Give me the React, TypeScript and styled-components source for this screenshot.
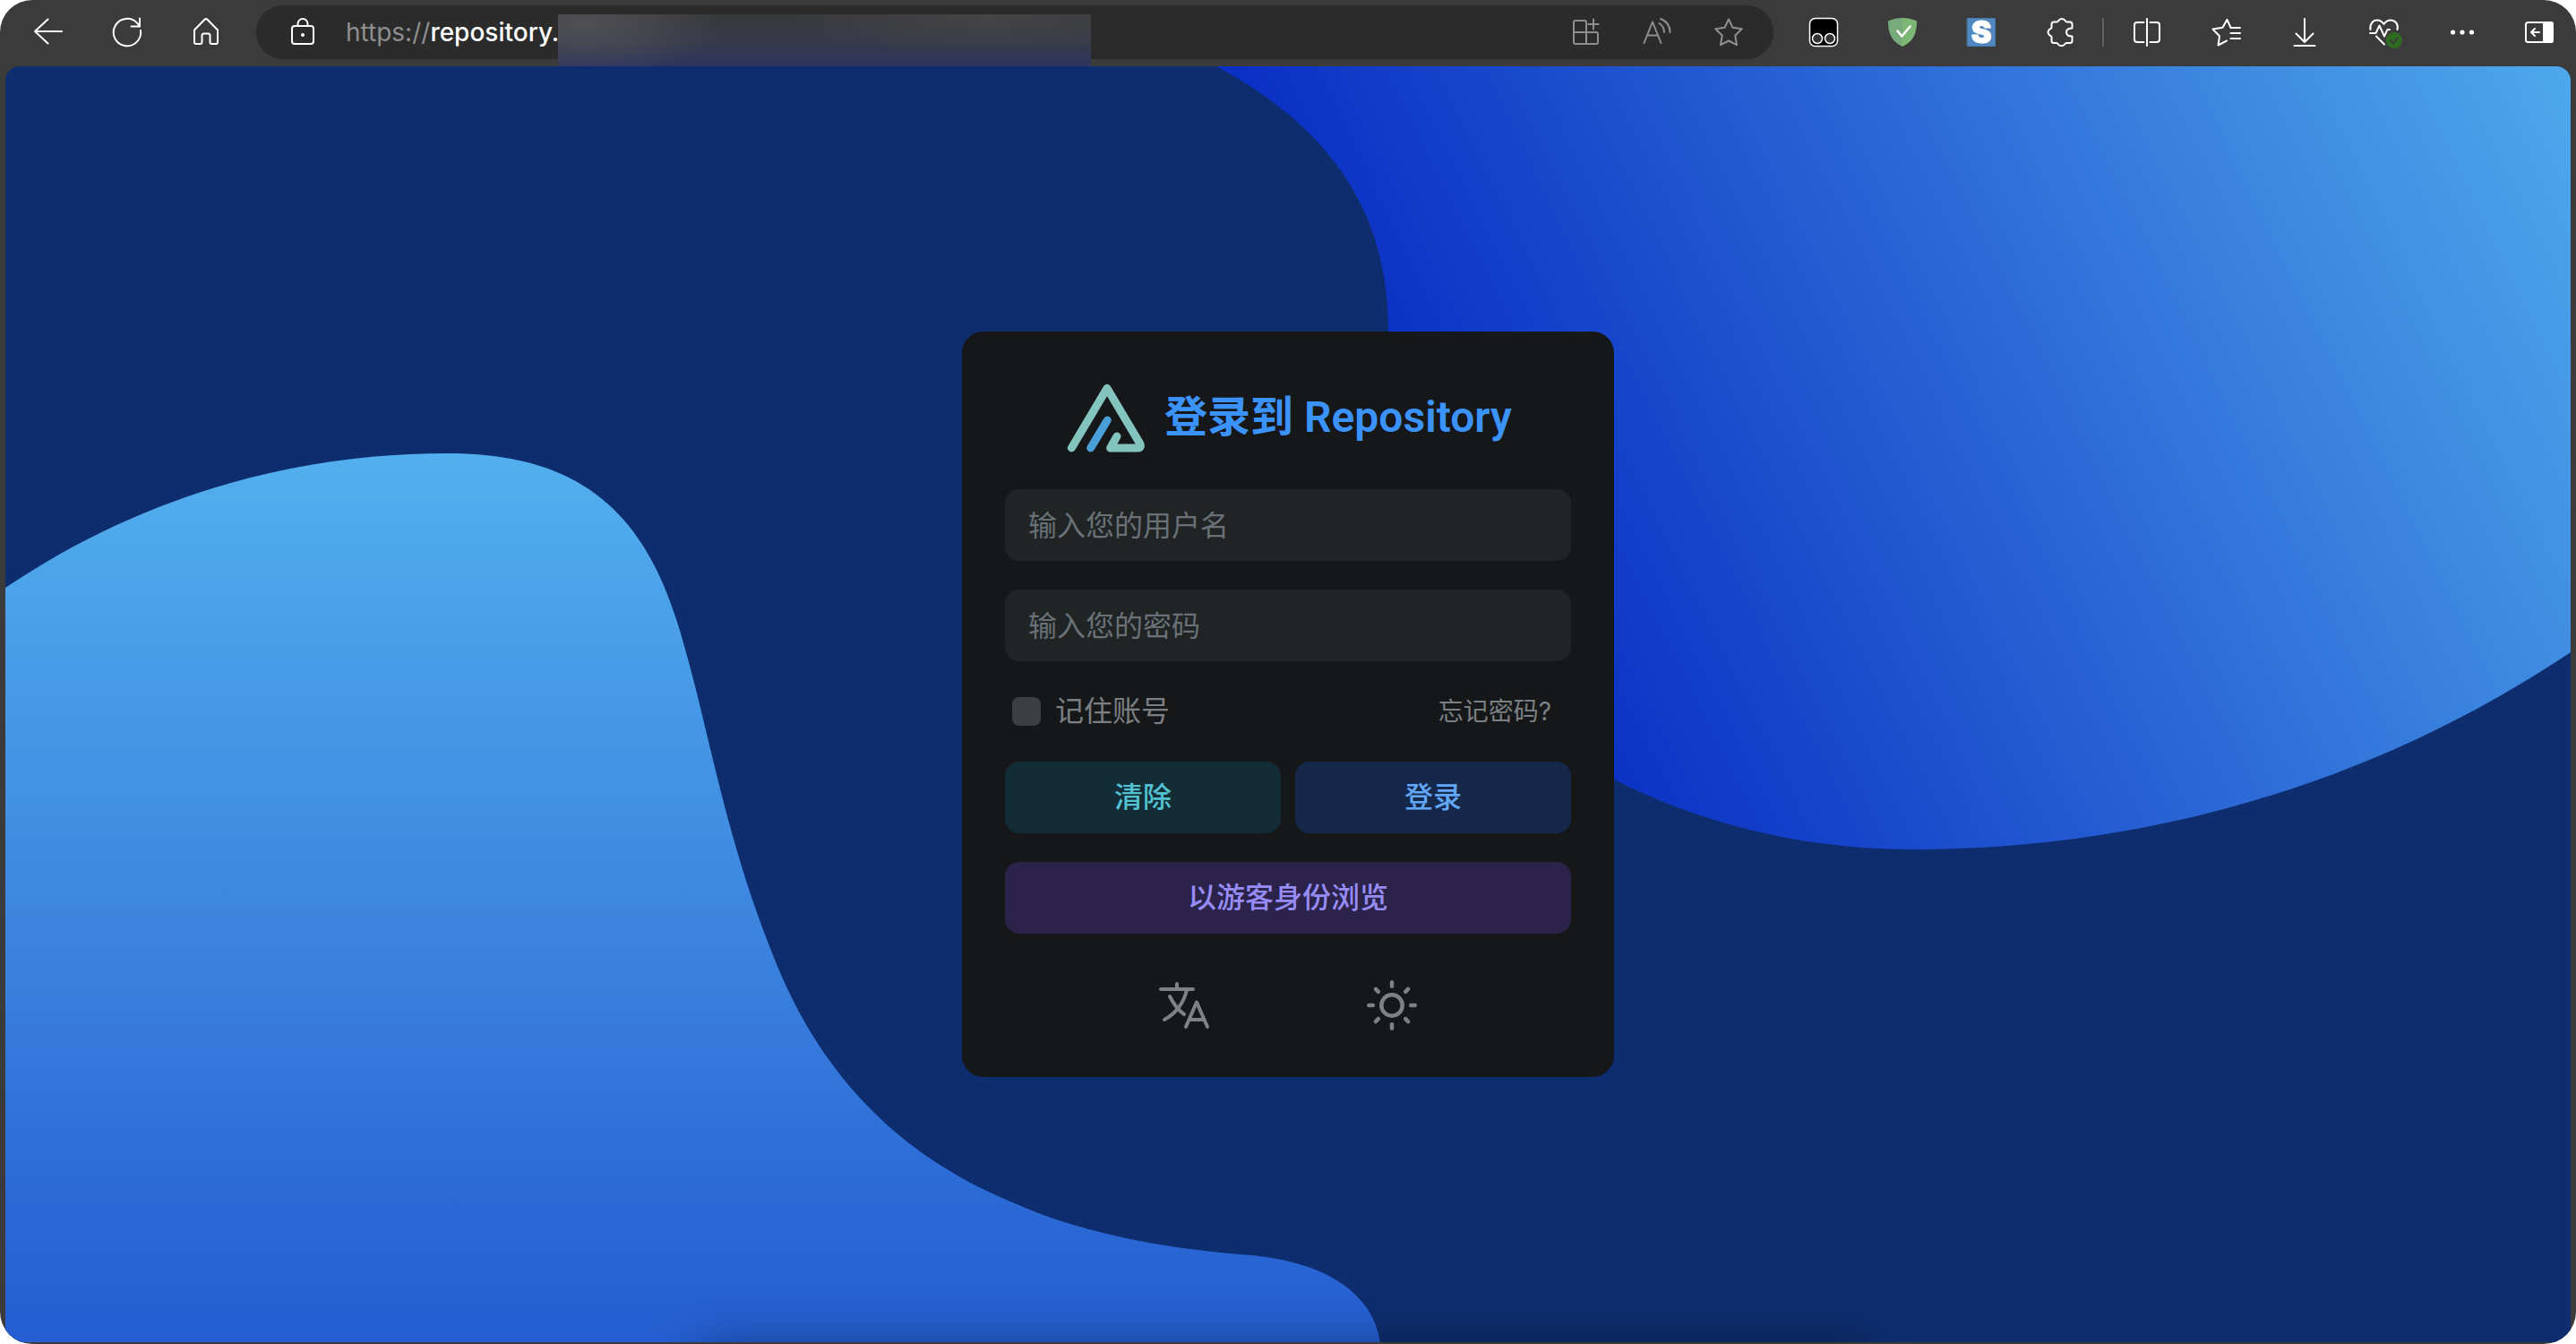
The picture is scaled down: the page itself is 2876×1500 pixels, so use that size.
import React from "react";
import styled, { createGlobalStyle } from "styled-components";

const GlobalStyle = createGlobalStyle`
  *, *::before, *::after { box-sizing: border-box; }
  body {
    margin: 0;
    background: #ffffff;
    font-family: Inter, "Noto Sans CJK SC", sans-serif;
  }
  button, input { font-family: inherit; }
`;

const Frame = styled.div`
  display: flex;
  flex-direction: column;
  min-height: 100vh;
  padding-bottom: 2px;
  border-radius: 36px;
  overflow: hidden;
  background: #3b3b3b;
`;

const Toolbar = styled.header`
  display: flex;
  align-items: center;
  height: 74px;
  padding: 6px 0 8px 10px;
`;

const ToolButton = styled.button<{ $dim?: boolean; $width?: number }>`
  display: flex;
  flex: 0 1 ${(p) => p.$width ?? 88}px;
  align-items: center;
  justify-content: center;
  height: 60px;
  padding: 0;
  border: 0;
  background: none;
  color: ${(p) => (p.$dim ? "#8f8f8f" : "#ffffff")};
  cursor: pointer;
`;

const AddressBar = styled.div`
  position: relative;
  display: flex;
  flex: 1;
  align-items: center;
  height: 60px;
  margin: 0 12px;
  padding: 0 10px 0 8px;
  border-radius: 30px;
  background: #2b2b2b;
`;

const Url = styled.div`
  margin-right: auto;
  padding-left: 4px;
  white-space: nowrap;
  font-size: 28px;
  font-weight: 500;
  line-height: 40px;
  color: #ffffff;
`;

const Scheme = styled.span`
  color: #8f8f8f;
  font-weight: 400;
`;

const Smudge = styled.div`
  position: absolute;
  left: 337px;
  top: 10px;
  width: 595px;
  height: 58px;
  background:
    radial-gradient(ellipse 150px 60px at 30px 10px, rgba(96, 96, 98, 0.6), rgba(96, 96, 98, 0)),
    radial-gradient(ellipse 220px 40px at 480px 4px, rgba(76, 76, 74, 0.6), rgba(76, 76, 74, 0)),
    linear-gradient(#38393c, #373a4a 55%, #2f355e);
`;

const Separator = styled.div`
  width: 2px;
  height: 32px;
  margin: 0 4px 0 3px;
  background: #606060;
`;

const Page = styled.main`
  position: relative;
  display: flex;
  flex: 1;
  align-items: center;
  justify-content: center;
  margin: 0 6px;
  border-radius: 16px 16px 0 0;
  overflow: hidden;
  background: #0e2d6e;
`;

const Backdrop = styled.svg`
  position: absolute;
  inset: 0;
  width: 100%;
  height: 100%;
`;

const Card = styled.form`
  position: relative;
  display: flex;
  flex-direction: column;
  gap: 32px;
  width: 728px;
  padding: 48px;
  border-radius: 24px;
  background: #161718;
`;

const Brand = styled.div`
  display: flex;
  align-items: center;
  justify-content: center;
  gap: 16px;
  height: 96px;
`;

const Title = styled.h1`
  margin: 0;
  color: #3b92f9;
  font-family: Roboto, "Noto Sans CJK SC", sans-serif;
  font-size: 48px;
  font-weight: 600;
  line-height: 64px;
  white-space: nowrap;
`;

const Field = styled.input`
  width: 100%;
  height: 80px;
  padding: 0 26px;
  border: 0;
  border-radius: 16px;
  outline: 0;
  background: #202425;
  color: #ecedee;
  font-size: 32px;
  &::placeholder {
    color: #697177;
    opacity: 1;
  }
`;

const Options = styled.div`
  display: flex;
  align-items: center;
  justify-content: space-between;
  height: 48px;
  padding: 0 22px 0 8px;
  color: #7b8084;
`;

const Remember = styled.label`
  display: flex;
  align-items: center;
  gap: 16px;
  font-size: 32px;
  line-height: 48px;
`;

const Checkbox = styled.input`
  appearance: none;
  width: 32px;
  height: 32px;
  margin: 0;
  border-radius: 8px;
  background: #3c3f41;
`;

const Forgot = styled.a`
  color: inherit;
  font-size: 28px;
  line-height: 48px;
  text-decoration: none;
`;

const Actions = styled.div`
  display: grid;
  grid-template-columns: 1fr 1fr;
  gap: 16px;
`;

const tones = {
  info: { bg: "#132d36", fg: "#54c1d2" },
  accent: { bg: "#152849", fg: "#62a6f7" },
  guest: { bg: "#2b234a", fg: "#978bf6" },
};

const ActionButton = styled.button<{ $tone: keyof typeof tones }>`
  height: 80px;
  border: 0;
  border-radius: 16px;
  background: ${(p) => tones[p.$tone].bg};
  color: ${(p) => tones[p.$tone].fg};
  font-size: 32px;
  font-weight: 500;
  line-height: 48px;
  cursor: pointer;
`;

const Switches = styled.div`
  display: flex;
  justify-content: center;
  gap: 168px;
  padding-top: 16px;
`;

const SwitchButton = styled.button`
  display: flex;
  width: 64px;
  height: 64px;
  padding: 0;
  border: 0;
  background: none;
  color: #7d8286;
  cursor: pointer;
`;

function Icon({ children }: { children: React.ReactNode }) {
  return (
    <svg
      width="32"
      height="32"
      viewBox="0 0 32 32"
      fill="none"
      stroke="currentColor"
      strokeWidth="2"
      strokeLinecap="round"
      strokeLinejoin="round"
      overflow="visible"
      aria-hidden="true"
    >
      {children}
    </svg>
  );
}

const BackIcon = () => (
  <Icon>
    <path d="M15.5 1.5L1 15l14.500 13.500M1 15h30" />
  </Icon>
);

const ReloadIcon = () => (
  <Icon>
    <path d="M31 14A15.200 15.200 0 1 1 27.500 6.200L30 9.500" />
    <path d="M30 0.500v9H20.500" />
  </Icon>
);

const HomeIcon = () => (
  <Icon>
    <path d="M3 13.500L14.500 1.800q1.500-1.300 3 0L29 13.500V27a2 2 0 0 1-2 2h-4.500a2 2 0 0 1-2-2v-7.500a2 2 0 0 0-2-2h-5a2 2 0 0 0-2 2V27a2 2 0 0 1-2 2H5a2 2 0 0 1-2-2z" />
  </Icon>
);

const LockIcon = () => (
  <Icon>
    <rect x="4" y="9" width="24" height="20" rx="3" />
    <path d="M10.500 9V6.500a5.500 5.500 0 0 1 11 0V9" />
    <circle cx="16" cy="19" r="1" fill="currentColor" />
  </Icon>
);

const AppsIcon = () => (
  <Icon>
    <path d="M17 16V5a2 2 0 0 0-2-2H5a2 2 0 0 0-2 2v22a2 2 0 0 0 2 2h23a2 2 0 0 0 2-2v-9a2 2 0 0 0-2-2H3M17 16v13M25 1.500v11M19.500 7h11" />
  </Icon>
);

const ReadAloudIcon = () => (
  <Icon>
    <path d="M1.500 28L11 4.500L20.500 28M5 19.500h12M18.500 6Q24 9.500 24 16M20 1Q30.500 5 30.500 16" />
  </Icon>
);

const StarIcon = () => (
  <Icon>
    <path d="M16 1.500L20.500 10.800L30.700 12.200L23.300 19.500L25 30.200L16 25.500L7 30.200L8.700 19.500L1.300 12.200L11.500 10.800z" />
  </Icon>
);

const MonkeyIcon = () => (
  <Icon>
    <rect x="0.500" y="0.500" width="31" height="31" rx="6" fill="#000" strokeWidth="1.500" />
    <circle cx="9" cy="23" r="5.500" fill="#333" strokeWidth="1.500" />
    <circle cx="23" cy="23" r="5.500" fill="#333" strokeWidth="1.500" />
  </Icon>
);

const ShieldIcon = () => (
  <Icon>
    <path d="M16 0C11 0 5 1 0 3.500C0 16 3 26 16 32z" fill="#78ab7c" stroke="none" />
    <path d="M16 0C21 0 27 1 32 3.500C32 16 29 26 16 32z" fill="#7cb776" stroke="none" />
    <path d="M10.500 14.500l4.800 6L24.500 9.500" strokeWidth="2.500" />
  </Icon>
);

const StylusIcon = () => (
  <Icon>
    <rect x="0.500" y="0.500" width="31" height="31" fill="#4f87c0" stroke="#4a7cab" strokeWidth="1" />
    <text
      x="16"
      y="28"
      textAnchor="middle"
      fontFamily="Inter, sans-serif"
      fontSize="34"
      fontWeight="900"
      fill="#fff"
      stroke="#fff"
      strokeWidth="1"
    >
      S
    </text>
  </Icon>
);

const PuzzleIcon = () => (
  <Icon>
    <path d="M9 4.500h3.500C14.500 4.500 13.800 1 18 1s3.500 3.500 5.500 3.500H27A2.500 2.500 0 0 1 29.500 7v4.500C26 11.500 23 12.500 23 16s3 4.500 6.500 4.500v5A2.500 2.500 0 0 1 27 28h-4C21 28 21.500 31.300 17.500 31.300S14 28 12 28H9a2.500 2.500 0 0 1-2.500-2.500V21C6.500 19.500 2.500 20 2.500 16s4-3.500 4-5V7A2.500 2.500 0 0 1 9 4.500z" />
  </Icon>
);

const SplitIcon = () => (
  <Icon>
    <path d="M12.500 5H5a3 3 0 0 0-3 3v16a3 3 0 0 0 3 3h7.500M19.500 5H27a3 3 0 0 1 3 3v16a3 3 0 0 1-3 3h-7.500M16 1v30" />
  </Icon>
);

const FavoritesIcon = () => (
  <Icon>
    <path d="M32 11H21.500L17.500 1.800L12.500 10.800L1.500 12.600L9 20.300L7.500 30.500L17 25.500M21.500 17H32M21.500 23H32" />
  </Icon>
);

const DownloadIcon = () => (
  <Icon>
    <path d="M16 1v26M6.500 17.500L16 27l9.500-9.500M4.500 31h23" />
  </Icon>
);

const HealthIcon = () => (
  <Icon>
    <path d="M1.500 13C0.500 6.500 4.500 2.500 9 2.500c3 0 5.500 1.500 7.500 4.500C18.500 4 21 2.500 24 2.500C29.500 2.500 33 7.500 31.500 13M1 17h6.500L11.500 8.500L17 20.500L20.500 13h2.500M8 20.500L17 29.500" />
    <circle cx="28" cy="25" r="9" fill="#2e6b1f" stroke="none" />
    <path d="M24 25.500l3 3l5-6.500" stroke="#3b3b3b" />
  </Icon>
);

const MoreIcon = () => (
  <Icon>
    <g fill="currentColor" stroke="none">
      <circle cx="5.500" cy="16" r="2.600" />
      <circle cx="16" cy="16" r="2.600" />
      <circle cx="26.500" cy="16" r="2.600" />
    </g>
  </Icon>
);

const SidebarIcon = () => (
  <Icon>
    <rect x="1" y="5" width="30" height="22" rx="2.500" />
    <path d="M21 5h8a2 2 0 0 1 2 2v18a2 2 0 0 1-2 2h-8z" fill="currentColor" />
    <path d="M16 16H7M11 12L7 16l4 4" />
  </Icon>
);

const BrandLogo = () => (
  <svg
    width="96"
    height="96"
    viewBox="0 0 288 288"
    fill="none"
    strokeWidth="27"
    strokeLinecap="round"
    strokeLinejoin="round"
    aria-hidden="true"
  >
    <path d="M25 246L144 46L253 229Q262 246 246 246H155L177 207" stroke="#83c5be" />
    <path d="M89 246L145 153" stroke="#499fd8" />
  </svg>
);

const LanguageIcon = () => (
  <svg
    width="64"
    height="64"
    viewBox="0 0 64 64"
    fill="none"
    stroke="currentColor"
    strokeWidth="4"
    strokeLinecap="round"
    strokeLinejoin="round"
    aria-hidden="true"
  >
    <path d="M6 14H42M24 8V14M35 15C31 31 21 42 10 48M16 22C20 30 25 37 32 42" />
    <path d="M34 56L46 28.500L58 56M38 48H54" />
  </svg>
);

const SunIcon = () => (
  <svg
    width="64"
    height="64"
    viewBox="0 0 64 64"
    fill="none"
    stroke="currentColor"
    strokeWidth="4.500"
    strokeLinecap="round"
    aria-hidden="true"
  >
    <circle cx="32" cy="32" r="11.700" />
    <path d="M32 6.300v4.500M32 53.200v4.500M6.300 32h4.500M53.200 32h4.500M13.900 13.900l2.900 2.900M47.200 47.200l2.900 2.900M13.900 50.100l2.900-2.900M47.200 16.800l2.900-2.900" />
  </svg>
);

const LoginBackdrop = () => (
  <Backdrop viewBox="6 74 2864 1424" preserveAspectRatio="none" aria-hidden="true">
    <defs>
      <linearGradient id="sky" gradientUnits="userSpaceOnUse" x1="1526" y1="366" x2="2720" y2="-222">
        <stop offset="0" stopColor="#0b30c4" />
        <stop offset="1" stopColor="#4fa8eb" />
      </linearGradient>
      <linearGradient id="wave" gradientUnits="userSpaceOnUse" x1="0" y1="506" x2="0" y2="1498">
        <stop offset="0" stopColor="#53afed" />
        <stop offset="0.590" stopColor="#3980de" />
        <stop offset="0.800" stopColor="#2d6dd7" />
        <stop offset="1" stopColor="#245ed1" />
      </linearGradient>
      <filter id="soften" x="-20%" y="-200%" width="140%" height="500%">
        <feGaussianBlur stdDeviation="30" />
      </filter>
    </defs>
    <path
      fill="url(#sky)"
      d="M1358 74C1480 140 1550 230 1550 370C1550 600 1650 790 1802 870C1905 922 2020 948 2133 948C2410 948 2660 868 2870 728V74z"
    />
    <path
      fill="url(#wave)"
      d="M6 656C160 552 330 506 500 506C640 506 715 565 755 691C791 804 807 935 872 1088C925 1209 1010 1292 1128 1341C1205 1376 1300 1394 1398 1401C1490 1410 1535 1450 1541 1500H6z"
    />
    <rect x="770" y="1500" width="1330" height="80" rx="40" fill="#000" fillOpacity="0.320" filter="url(#soften)" />
  </Backdrop>
);

const extensions = [
  { label: "Tampermonkey", icon: <MonkeyIcon /> },
  { label: "AdGuard", icon: <ShieldIcon /> },
  { label: "Stylus", icon: <StylusIcon /> },
  { label: "Extensions", icon: <PuzzleIcon /> },
];

const browserTools = [
  { label: "Split screen", icon: <SplitIcon /> },
  { label: "Favorites", icon: <FavoritesIcon /> },
  { label: "Downloads", icon: <DownloadIcon /> },
  { label: "Browser essentials", icon: <HealthIcon /> },
  { label: "More", icon: <MoreIcon /> },
];

export default function App() {
  return (
    <>
      <GlobalStyle />
      <Frame>
        <Toolbar>
          <ToolButton aria-label="Back"><BackIcon /></ToolButton>
          <ToolButton aria-label="Reload"><ReloadIcon /></ToolButton>
          <ToolButton aria-label="Home"><HomeIcon /></ToolButton>
          <AddressBar>
            <ToolButton aria-label="Site information"><LockIcon /></ToolButton>
            <Url>
              <Scheme>https://</Scheme>repository.C
            </Url>
            <Smudge />
            <ToolButton $dim $width={80} aria-label="Install app"><AppsIcon /></ToolButton>
            <ToolButton $dim $width={80} aria-label="Read aloud"><ReadAloudIcon /></ToolButton>
            <ToolButton $dim $width={80} aria-label="Add to favorites"><StarIcon /></ToolButton>
          </AddressBar>
          {extensions.map((tool) => (
            <ToolButton key={tool.label} aria-label={tool.label}>{tool.icon}</ToolButton>
          ))}
          <Separator />
          {browserTools.map((tool) => (
            <ToolButton key={tool.label} aria-label={tool.label}>{tool.icon}</ToolButton>
          ))}
          <ToolButton $width={83} aria-label="Sidebar"><SidebarIcon /></ToolButton>
        </Toolbar>
        <Page>
          <LoginBackdrop />
          <Card onSubmit={(event) => event.preventDefault()}>
            <Brand>
              <BrandLogo />
              <Title>登录到 Repository</Title>
            </Brand>
            <Field type="text" aria-label="用户名" placeholder="输入您的用户名" />
            <Field type="password" aria-label="密码" placeholder="输入您的密码" />
            <Options>
              <Remember>
                <Checkbox type="checkbox" />
                记住账号
              </Remember>
              <Forgot href="#forgot">忘记密码?</Forgot>
            </Options>
            <Actions>
              <ActionButton type="reset" $tone="info">清除</ActionButton>
              <ActionButton type="submit" $tone="accent">登录</ActionButton>
            </Actions>
            <ActionButton type="button" $tone="guest">以游客身份浏览</ActionButton>
            <Switches>
              <SwitchButton type="button" aria-label="语言"><LanguageIcon /></SwitchButton>
              <SwitchButton type="button" aria-label="主题"><SunIcon /></SwitchButton>
            </Switches>
          </Card>
        </Page>
      </Frame>
    </>
  );
}
